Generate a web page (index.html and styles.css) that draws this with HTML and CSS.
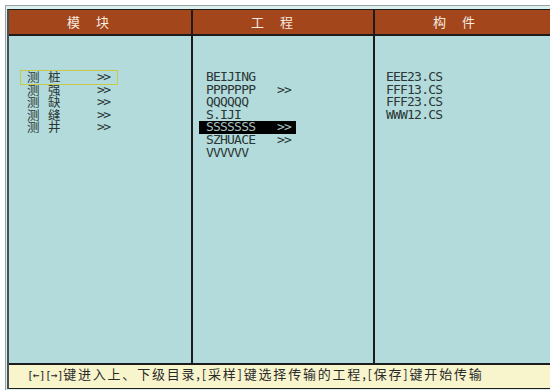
FILE: index.html
```html
<!DOCTYPE html>
<html lang="zh">
<head>
<meta charset="utf-8">
<title>传输</title>
<link rel="stylesheet" href="styles.css">
</head>
<body>
<div class="window">
  <div class="panel">
    <div class="cols">
      <section class="col col-1">
        <div class="head">模块</div>
        <div class="list">
          <div class="row focus"><span class="k">测</span><span class="v">桩</span><span class="arr">&gt;&gt;</span></div>
          <div class="row"><span class="k">测</span><span class="v">强</span><span class="arr">&gt;&gt;</span></div>
          <div class="row"><span class="k">测</span><span class="v">缺</span><span class="arr">&gt;&gt;</span></div>
          <div class="row"><span class="k">测</span><span class="v">缝</span><span class="arr">&gt;&gt;</span></div>
          <div class="row"><span class="k">测</span><span class="v">井</span><span class="arr">&gt;&gt;</span></div>
        </div>
      </section>
      <section class="col col-2">
        <div class="head">工程</div>
        <div class="list">
          <div class="row"><span class="name">BEIJING</span></div>
          <div class="row"><span class="name">PPPPPPP</span><span class="arr">&gt;&gt;</span></div>
          <div class="row"><span class="name">QQQQQQ</span></div>
          <div class="row"><span class="name">S.IJI</span></div>
          <div class="row selected"><span class="name">SSSSSSS</span><span class="arr">&gt;&gt;</span></div>
          <div class="row"><span class="name">SZHUACE</span><span class="arr">&gt;&gt;</span></div>
          <div class="row"><span class="name">VVVVVV</span></div>
        </div>
      </section>
      <section class="col col-3">
        <div class="head">构件</div>
        <div class="list">
          <div class="row"><span class="name">EEE23.CS</span></div>
          <div class="row"><span class="name">FFF13.CS</span></div>
          <div class="row"><span class="name">FFF23.CS</span></div>
          <div class="row"><span class="name">WWW12.CS</span></div>
        </div>
      </section>
    </div>
    <div class="status"><span class="keys">[←][→]</span>键进入上、下级目录,[采样]键选择传输的工程,[保存]键开始传输</div>
  </div>
</div>
</body>
</html>
```
FILE: styles.css
```css
html, body {
  margin: 0;
  padding: 0;
  background: #ffffff;
}
body {
  width: 550px;
  height: 390px;
  overflow: hidden;
}
.window {
  margin: 5px 0 0 5px;
  width: 570px;
  border-top: 1px solid #9aa3a3;
  border-left: 1px solid #9aa3a3;
  padding: 3px 0 2px 1px;
  background: #dcefef;
}
.panel {
  border-top: 1px solid #1c1c1c;
  border-left: 2px solid #4a5050;
}
.cols {
  display: grid;
  grid-template-columns: 184px 182px 1fr;
  height: 353px;
}
.col {
  display: flex;
  flex-direction: column;
  box-sizing: border-box;
  border-right: 2px solid #1c1c1c;
}
.col-3 {
  border-right: none;
}
.head {
  height: 24px;
  flex: none;
  background: #a3461b;
  border-bottom: 2px solid #1c1c1c;
  padding-left: 58px;
  color: #f6ece2;
  font: 13px/24px "Noto Sans CJK SC", sans-serif;
  letter-spacing: 16px;
}
.list {
  flex: 1;
  background: #b3dbdb;
  padding-top: 35px;
  font: 13px "DejaVu Sans Mono", monospace;
  letter-spacing: -0.8px;
  color: #2b3636;
}
.row {
  height: 12.6px;
  line-height: 12.6px;
  display: flex;
  align-items: center;
  white-space: pre;
  box-sizing: border-box;
}
.col-1 .row {
  margin-left: 12px;
  padding-left: 6px;
  width: 96px;
  font-family: "Noto Sans CJK SC", sans-serif;
  font-size: 12.5px;
  letter-spacing: 0;
}
.col-1 .row .arr {
  font-family: "DejaVu Sans Mono", monospace;
  font-size: 13px;
  letter-spacing: -1.5px;
}
.col-1 .row.focus {
  outline: 1px solid #c9c94a;
}
.k {
  width: 21px;
}
.v {
  width: 49px;
}
.col-2 .row {
  margin-left: 6px;
  padding-left: 7px;
  width: 97px;
}
.col-2 .name {
  width: 71px;
}
.col-2 .row.selected {
  background: #000000;
  color: #a9c2c2;
}
.col-3 .row {
  padding-left: 11px;
}
.status {
  height: 22px;
  padding-top: 1px;
  border-top: 2px solid #1c1c1c;
  border-bottom: 1px solid #1c1c1c;
  background: #f8f5cd;
  padding-left: 18px;
  font: 13px/16px "Noto Sans CJK SC", sans-serif;
  letter-spacing: 1.8px;
  color: #2a2a2a;
  white-space: nowrap;
}
.keys {
  font-family: "DejaVu Sans Mono", monospace;
  font-size: 11px;
  letter-spacing: -0.6px;
}
```
